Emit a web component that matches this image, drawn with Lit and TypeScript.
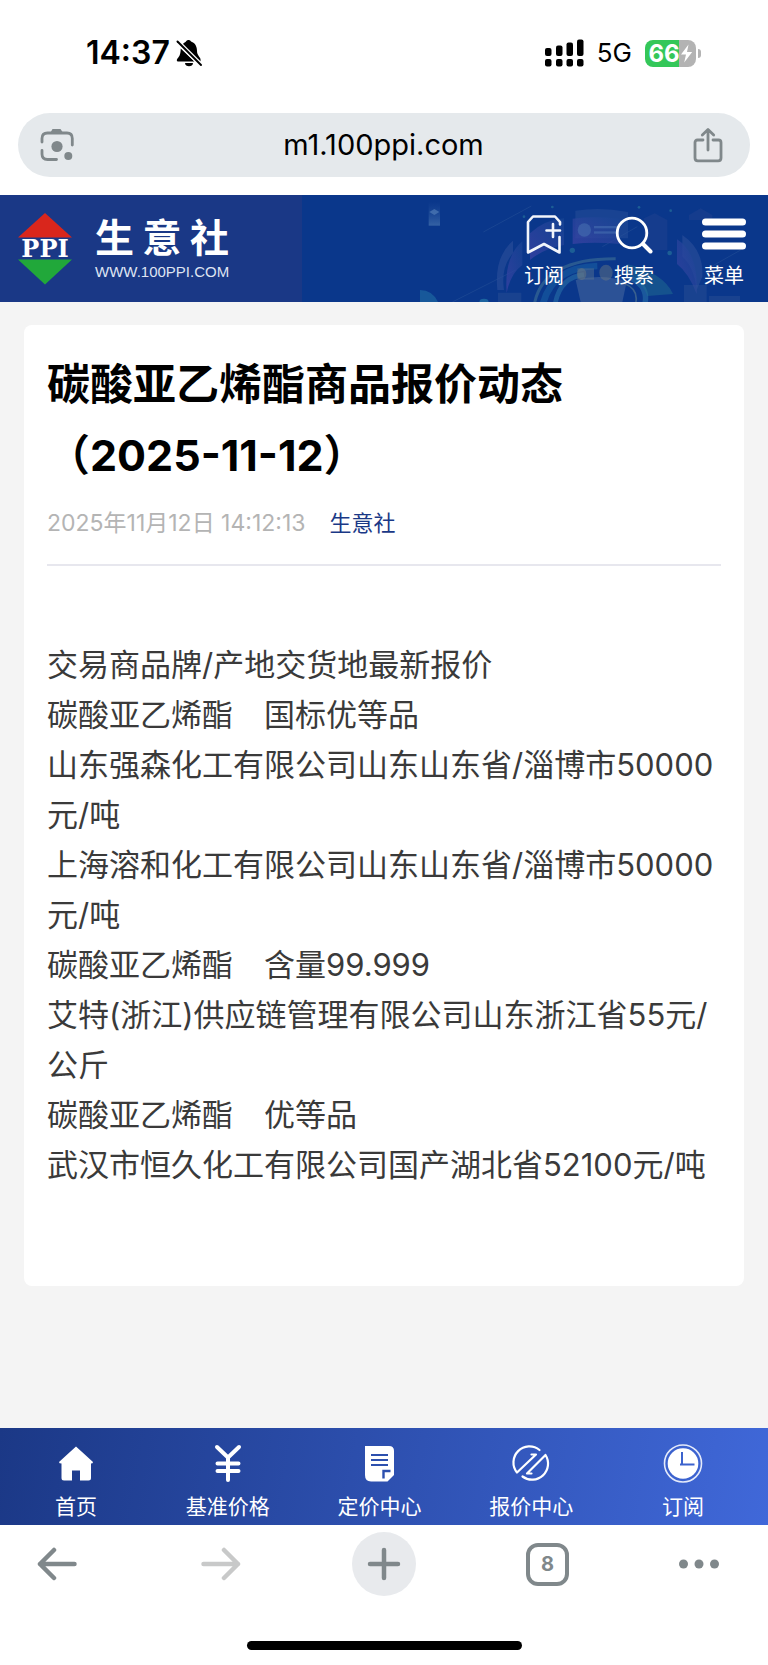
import { LitElement, html, css, svg } from "lit";
import { customElement } from "lit/decorators.js";

const fonts = css`
  font-family: Inter, "Noto Sans CJK SC", sans-serif;
`;

const reset = css`
  * {
    box-sizing: border-box;
  }
  svg {
    display: block;
    flex: none;
  }
  button {
    border: 0;
    padding: 0;
    margin: 0;
    background: none;
    color: inherit;
    font: inherit;
    cursor: pointer;
  }
  a {
    color: inherit;
    text-decoration: none;
  }
`;

@customElement("status-bar")
export class StatusBar extends LitElement {
  static styles = [
    reset,
    css`
      :host {
        display: flex;
        align-items: center;
        justify-content: space-between;
        box-sizing: border-box;
        height: 104px;
        padding: 2px 67px 0 86px;
        color: #000;
        ${fonts}
      }
      .group {
        display: flex;
        align-items: center;
      }
      .left {
        gap: 6px;
      }
      .right {
        gap: 13px;
      }
      .time {
        font-size: 32px;
        line-height: 40px;
        font-weight: 600;
      }
      .net {
        font-size: 26px;
        line-height: 32px;
      }
      .battery {
        display: flex;
        align-items: center;
        gap: 2px;
      }
      .cell {
        display: flex;
        align-items: center;
        justify-content: center;
        width: 51px;
        height: 27px;
        border-radius: 8px;
        background: linear-gradient(90deg, #34c759 66%, #b3b3b3 66%);
        color: #fff;
        font-size: 24px;
        line-height: 27px;
        font-weight: 700;
      }
      .nub {
        width: 3px;
        height: 9px;
        border-radius: 0 4px 4px 0;
        background: #b3b3b3;
      }
    `,
  ];

  render() {
    return html`
      <div class="group left">
        <span class="time">14:37</span>
        <svg width="26" height="28" viewBox="0 0 26 28" aria-hidden="true">
          <path d="M6.500 5.500C8 3.500 9.500 3 10 2.500C11 0.500 14 0.500 15 2.500C19.500 4 21 8 21 12C21 16 24 18 24.500 20V22.500H23.500Z" />
          <path d="M4.700 9.500L18.500 22.500H2C0.500 22.500 0.500 20.500 1.500 19.500C3.500 17.500 4.700 15 4.700 9.500Z" />
          <path d="M9 24H17C17 28.300 9 28.300 9 24Z" />
          <path d="M1.500 2.500L25 26" stroke="#fff" stroke-width="4.500" />
          <path d="M1.500 2.500L25 26" stroke="#000" stroke-width="1.900" stroke-linecap="round" />
        </svg>
      </div>
      <div class="group right">
        <svg width="39" height="28" viewBox="0 0 39 28" aria-hidden="true">
          <rect x="0" y="9" width="6.500" height="8" rx="2" />
          <rect x="11" y="6.500" width="6.500" height="10.500" rx="2" />
          <rect x="21.500" y="3.500" width="6.500" height="13.500" rx="2" />
          <rect x="32" y="0.500" width="6.500" height="16.500" rx="2" />
          <rect x="0" y="20" width="6.500" height="7.500" rx="2" />
          <rect x="11" y="20" width="6.500" height="7.500" rx="2" />
          <rect x="21.500" y="20" width="6.500" height="7.500" rx="2" />
          <rect x="32" y="20" width="6.500" height="7.500" rx="2" />
        </svg>
        <span class="net">5G</span>
        <div class="battery">
          <div class="cell">
            <span>66</span>
            <svg width="13" height="19" viewBox="0 0 13 19" aria-hidden="true">
              <path d="M8.500 0.500L1 10.500H6L4.200 18.500L12.200 8H7Z" fill="#fff" />
            </svg>
          </div>
          <div class="nub"></div>
        </div>
      </div>
    `;
  }
}

@customElement("address-bar")
export class AddressBar extends LitElement {
  static styles = [
    reset,
    css`
      :host {
        display: block;
        padding: 9px 18px 18px;
        ${fonts}
      }
      .bar {
        display: flex;
        align-items: center;
        justify-content: space-between;
        height: 64px;
        padding: 0 27px 0 22px;
        border-radius: 32px;
        background: #e5e9ec;
      }
      .url {
        font-size: 29px;
        line-height: 40px;
        color: #000;
      }
    `,
  ];

  render() {
    return html`
      <div class="bar">
        <button aria-label="Lens">
          <svg width="34" height="36" viewBox="0 0 34 36" fill="none" stroke="#80888b" stroke-width="2.800" stroke-linecap="round">
            <path d="M2 15V11.500Q2 6 7.500 6H27Q32.300 6 32.300 11.500V18" />
            <path d="M2 23.500V27Q2 32.500 7.500 32.500H16.500" />
            <path d="M10 6.500L12.500 2H20.500L23.500 6.500Z" fill="#80888b" stroke="none" />
            <circle cx="17" cy="19.500" r="5.600" fill="#80888b" stroke="none" />
            <circle cx="28.300" cy="29" r="4" fill="#80888b" stroke="none" />
          </svg>
        </button>
        <span class="url">m1.100ppi.com</span>
        <button aria-label="Share">
          <svg width="30" height="36" viewBox="0 0 30 36" fill="none" stroke="#80888b" stroke-width="2.800" stroke-linecap="round" stroke-linejoin="round">
            <path d="M10 13H4.500Q2 13 2 15.500V31Q2 33.800 4.800 33.800H25.200Q28 33.800 28 31V15.500Q28 13 25.500 13H20" />
            <path d="M15 23V3M9.300 8L15 2.500L20.700 8" />
          </svg>
        </button>
      </div>
    `;
  }
}

@customElement("site-header")
export class SiteHeader extends LitElement {
  static styles = [
    reset,
    css`
      :host {
        display: block;
        color: #fff;
        ${fonts}
      }
      .header {
        display: grid;
        height: 107px;
        background: #0a378b;
      }
      .scene,
      .content {
        grid-area: 1 / 1;
      }
      .scene {
        justify-self: end;
      }
      .content {
        display: flex;
        justify-content: space-between;
      }
      .brand {
        display: flex;
        align-items: center;
        gap: 23px;
        width: 302px;
        padding-left: 18px;
        background: #1a3886;
      }
      .mark {
        font-family: "DejaVu Serif", serif;
        font-weight: 700;
        font-size: 24px;
      }
      .names {
        display: flex;
        flex-direction: column;
        gap: 3px;
        width: 134px;
        padding-bottom: 1px;
      }
      .name {
        display: flex;
        justify-content: space-between;
        font-size: 39px;
        line-height: 44px;
        font-weight: 700;
      }
      .site {
        font-family: "Liberation Sans", sans-serif;
        font-size: 15px;
        line-height: 18px;
        color: #dfe4f2;
      }
      .menu {
        display: flex;
        gap: 46px;
        padding: 18px 22px 0 0;
      }
      .item {
        display: flex;
        flex-direction: column;
        align-items: center;
        gap: 7px;
        width: 44px;
        font-size: 20px;
        line-height: 28px;
      }
    `,
  ];

  render() {
    return html`
      <header class="header">
        <svg class="scene" width="384" height="107" viewBox="0 15 1152 321" aria-hidden="true">
          <defs>
            <linearGradient id="panel" x1="0" y1="1" x2="1" y2="0">
              <stop offset="0" stop-color="#3f43a6" />
              <stop offset="1" stop-color="#174594" />
            </linearGradient>
            <linearGradient id="fade" x1="0" y1="0" x2="0" y2="1">
              <stop offset="0" stop-color="#2d5aa5" stop-opacity="0" />
              <stop offset="1" stop-color="#4673ae" stop-opacity="0.700" />
            </linearGradient>
          </defs>
          <rect x="134" y="35" width="34" height="72" fill="url(#fade)" />
          <path d="M136 66L151 57L166 66L151 75Z" fill="#5a85bd" opacity="0.600" />
          <g stroke="#315b9d" stroke-width="2" opacity="0.600">
            <path d="M298 126L442 48M205 336L395 240M655 170L760 110M985 228L1070 180" />
          </g>
          <path d="M340 300Q330 200 387 152V190Q350 230 360 300Z" fill="#2b4f9b" opacity="0.600" />
          <path d="M368 308Q360 200 415 154V225Q380 250 368 308Z" fill="url(#panel)" opacity="0.700" />
          <path d="M438 210V130Q480 90 540 85V165Q480 175 438 210Z" fill="url(#panel)" opacity="0.700" />
          <path d="M574 62Q650 50 732 66V145H574Z" fill="#274f99" opacity="0.500" />
          <path d="M566 86Q630 78 706 86V162Q630 154 566 162Z" fill="url(#panel)" opacity="0.700" />
          <g fill="#466fb1" opacity="0.600">
            <circle cx="601" cy="120" r="20" />
            <rect x="630" y="108" width="70" height="7" />
            <rect x="630" y="124" width="70" height="7" />
          </g>
          <path d="M780 85L812 70L850 90V180H780ZM915 75L950 55L985 75V90H915Z" fill="#1c3f90" opacity="0.600" />
          <path d="M895 135Q960 180 955 260L938 300Q930 230 895 200Z" fill="#2b4f9b" opacity="0.600" />
          <path d="M879 148Q945 190 938 312Q915 250 879 222Z" fill="url(#panel)" opacity="0.700" />
          <g fill="none">
            <path d="M450 350Q470 205 695 206" stroke="#477b98" stroke-width="9" opacity="0.500" />
            <path d="M475 350Q500 232 640 228" stroke="#15599f" stroke-width="20" opacity="0.700" />
            <path d="M512 350Q525 262 600 254" stroke="#2b79ae" stroke-width="14" opacity="0.500" />
            <path d="M735 262Q800 290 780 350" stroke="#2b79ae" stroke-width="16" opacity="0.500" />
            <path d="M720 280Q770 300 752 350" stroke="#688892" stroke-width="5" opacity="0.500" />
          </g>
          <path d="M730 222Q840 250 867 312L790 318Q770 265 725 250Z" fill="#247393" opacity="0.450" />
          <path d="M575 270Q655 250 728 275L715 336H590Z" fill="#486aa0" opacity="0.550" />
          <rect x="580" y="235" width="50" height="34" fill="#5e7591" opacity="0.450" />
          <ellipse cx="666" cy="248" rx="20" ry="24" fill="#6d7b80" opacity="0.450" />
          <ellipse cx="593" cy="252" rx="14" ry="18" fill="#6d7b80" opacity="0.450" />
          <path d="M108 300Q145 300 162 336H108Z" fill="#2781ad" opacity="0.450" />
          <ellipse cx="300" cy="336" rx="14" ry="10" fill="#2781ad" opacity="0.600" />
          <g fill="#28799d" opacity="0.600">
            <circle cx="565" cy="181" r="8" />
            <circle cx="857" cy="189" r="7" />
            <circle cx="505" cy="51" r="4" />
            <circle cx="765" cy="52" r="4" />
            <circle cx="860" cy="62" r="4" />
            <circle cx="420" cy="80" r="4" />
          </g>
          <path d="M342 308H412V336H342ZM900 285H968V336H900ZM975 318H1068V336H975Z" fill="#2f5297" opacity="0.400" />
        </svg>
        <div class="content">
          <a class="brand" href="#home">
            <svg width="54" height="72" viewBox="0 0 54 72" role="img" aria-label="PPI">
              <path d="M27 0L54 24.500H0Z" fill="#d9261c" />
              <path d="M0 46.500H54L27 71.500Z" fill="#21a83a" />
              <text class="mark" x="27" y="44" text-anchor="middle" fill="#fff">PPI</text>
            </svg>
            <span class="names">
              <span class="name"><span>生</span><span>意</span><span>社</span></span>
              <span class="site">WWW.100PPI.COM</span>
            </span>
          </a>
          <nav class="menu">
            <a class="item" href="#subscribe">
              <svg width="38" height="42" viewBox="0 0 38 42" fill="none" stroke="#f2f5fb" stroke-width="2.600" stroke-linejoin="round" stroke-linecap="round">
                <path d="M35 11.500V9L30 3.500H8L3 9V39.500L19 31L34.500 39.500V24" />
                <path d="M28 11V24M21.500 17.500H35" />
              </svg>
              <span>订阅</span>
            </a>
            <a class="item" href="#search">
              <svg width="38" height="42" viewBox="0 0 38 42" fill="none" stroke="#fff" stroke-width="2.800" stroke-linecap="round">
                <circle cx="17" cy="20" r="14.800" />
                <path d="M28 31L35.500 38.500" stroke-width="4" />
              </svg>
              <span>搜索</span>
            </a>
            <a class="item" href="#menu">
              <svg width="44" height="42" viewBox="0 0 44 42" fill="#fff">
                <rect x="0" y="5.500" width="44" height="7" rx="3.500" />
                <rect x="0" y="17.500" width="44" height="7" rx="3.500" />
                <rect x="0" y="29.500" width="44" height="7" rx="3.500" />
              </svg>
              <span>菜单</span>
            </a>
          </nav>
        </div>
      </header>
    `;
  }
}

const quoteLines = [
  "交易商品牌/产地交货地最新报价",
  "碳酸亚乙烯酯　国标优等品",
  "山东强森化工有限公司山东山东省/淄博市50000元/吨",
  "上海溶和化工有限公司山东山东省/淄博市50000元/吨",
  "碳酸亚乙烯酯　含量99.999",
  "艾特(浙江)供应链管理有限公司山东浙江省55元/公斤",
  "碳酸亚乙烯酯　优等品",
  "武汉市恒久化工有限公司国产湖北省52100元/吨",
];

@customElement("quote-article")
export class QuoteArticle extends LitElement {
  static styles = [
    reset,
    css`
      :host {
        display: block;
        padding: 23px 24px;
        ${fonts}
      }
      .card {
        padding: 24px 23px 96px;
        border-radius: 8px;
        background: #fff;
      }
      .title {
        margin: 0;
        font-size: 43px;
        line-height: 71px;
        font-weight: 700;
        color: #000;
      }
      .meta {
        display: flex;
        gap: 24px;
        padding: 15px 0 24px;
        border-bottom: 2px solid #e7e7ee;
        font-size: 22px;
        line-height: 34px;
        color: #b4b4b4;
      }
      .date {
        font-size: 23px;
      }
      .source {
        color: #1a3886;
      }
      .body {
        padding-top: 74px;
        font-size: 31px;
        line-height: 50px;
        color: #3a3a3a;
      }
      .line {
        margin: 0;
      }
    `,
  ];

  render() {
    return html`
      <article class="card">
        <h1 class="title">碳酸亚乙烯酯商品报价动态（2025-11-12）</h1>
        <div class="meta">
          <time class="date">2025年11月12日 14:12:13</time>
          <a class="source" href="#source">生意社</a>
        </div>
        <div class="body">${quoteLines.map((line) => html`<p class="line">${line}</p>`)}</div>
      </article>
    `;
  }
}

const tabs = [
  {
    label: "首页",
    icon: svg`<path d="M20 2.500L37 18Q37 19.500 35 19.500V34Q35 36.500 32.500 36.500H24V26.500H16V36.500H8Q5.500 36.500 5.500 34V19.500Q3 19.500 3 18Z" fill="#fff" />`,
  },
  {
    label: "基准价格",
    icon: svg`<path d="M9 3L20 13.500L31 3M20 13.500V36M9.500 19.500H30.500M9.500 27H30.500" fill="none" stroke="#fff" stroke-width="4" stroke-linecap="round" stroke-linejoin="round" />`,
  },
  {
    label: "定价中心",
    icon: svg`<path d="M6 2H30Q35 2 35 7V31L28.500 37.500H12Q6 37.500 6 31Z" fill="#fff" /><path d="M12 11H29M12 16H29M12 21H29" stroke="#2d50ae" stroke-width="2" /><path d="M31.500 27H24.500V34.500" fill="none" stroke="#2d50ae" stroke-width="2.400" />`,
  },
  {
    label: "报价中心",
    icon: svg`<g fill="none" stroke="#fff" stroke-width="2.200" stroke-linecap="round" stroke-linejoin="round"><path d="M28.500 6A16 16 0 0 0 6 28.500L25 10.500H20.500" /><path d="M11.500 32.500A16 16 0 0 0 34.500 11L16 29.500H20.500" /></g>`,
  },
  {
    label: "订阅",
    icon: svg`<circle cx="20" cy="19.500" r="18.500" fill="none" stroke="#e4eafa" stroke-width="1.600" /><circle cx="20" cy="19.500" r="15.300" fill="#fff" /><path d="M19 8V21M17 20.500H31.500" stroke="#3c63cd" stroke-width="2" />`,
  },
];

@customElement("site-tabs")
export class SiteTabs extends LitElement {
  static styles = [
    reset,
    css`
      :host {
        display: block;
        color: #fff;
        ${fonts}
      }
      .tabs {
        display: grid;
        grid-template-columns: repeat(5, 1fr);
        height: 97px;
        padding: 16px 9px 0 0;
        background: linear-gradient(100deg, #1b3886, #4068d9);
      }
      .tab {
        display: flex;
        flex-direction: column;
        align-items: center;
        gap: 8px;
        font-size: 21px;
        line-height: 30px;
      }
    `,
  ];

  render() {
    return html`
      <nav class="tabs">
        ${tabs.map(
          (tab) => html`
            <a class="tab" href="#tab">
              <svg width="40" height="40" viewBox="0 0 40 40" aria-hidden="true">${tab.icon}</svg>
              <span>${tab.label}</span>
            </a>
          `,
        )}
      </nav>
    `;
  }
}

@customElement("browser-toolbar")
export class BrowserToolbar extends LitElement {
  static styles = [
    reset,
    css`
      :host {
        display: flex;
        flex-direction: column;
        align-items: center;
        gap: 45px;
        padding: 7px 25px 15px;
        background: #fff;
        color: #80888b;
        ${fonts}
      }
      .row {
        display: flex;
        justify-content: space-between;
        align-self: stretch;
      }
      .button {
        display: flex;
        align-items: center;
        justify-content: center;
        width: 64px;
        height: 64px;
        border-radius: 32px;
      }
      .new {
        background: #e8eaed;
      }
      .more {
        justify-content: flex-start;
      }
      .count {
        display: flex;
        align-items: center;
        justify-content: center;
        width: 43px;
        height: 43px;
        border: 4px solid #80888b;
        border-radius: 12px;
        font-size: 20px;
        line-height: 24px;
        font-weight: 700;
      }
      .home {
        width: 275px;
        height: 9px;
        border-radius: 5px;
        background: #000;
      }
    `,
  ];

  render() {
    return html`
      <div class="row">
        <button class="button" aria-label="Back">
          <svg width="40" height="34" viewBox="0 0 40 34" fill="none" stroke="#80888b" stroke-width="4.500" stroke-linecap="round" stroke-linejoin="round">
            <path d="M17 3L3 17L17 31M3 17H37.500" />
          </svg>
        </button>
        <button class="button" aria-label="Forward">
          <svg width="40" height="34" viewBox="0 0 40 34" fill="none" stroke="#c8c9c9" stroke-width="4.500" stroke-linecap="round" stroke-linejoin="round">
            <path d="M23 3L37 17L23 31M37 17H2.500" />
          </svg>
        </button>
        <button class="button new" aria-label="New tab">
          <svg width="34" height="34" viewBox="0 0 34 34" stroke="#80888b" stroke-width="4.500" stroke-linecap="round">
            <path d="M17 3V31M3 17H31" />
          </svg>
        </button>
        <button class="button" aria-label="Tabs"><span class="count">8</span></button>
        <button class="button more" aria-label="More">
          <svg width="40" height="10" viewBox="0 0 40 10" fill="#80888b">
            <circle cx="4.500" cy="5" r="4.500" />
            <circle cx="20" cy="5" r="4.500" />
            <circle cx="35.500" cy="5" r="4.500" />
          </svg>
        </button>
      </div>
      <div class="home"></div>
    `;
  }
}

@customElement("app-root")
export class AppRoot extends LitElement {
  static styles = css`
    :host {
      display: flex;
      flex-direction: column;
      min-height: 100vh;
      background: #fff;
    }
    .main {
      flex: 1;
      background: #f4f4f4;
    }
  `;

  render() {
    return html`
      <status-bar></status-bar>
      <address-bar></address-bar>
      <site-header></site-header>
      <main class="main"><quote-article></quote-article></main>
      <site-tabs></site-tabs>
      <browser-toolbar></browser-toolbar>
    `;
  }
}
